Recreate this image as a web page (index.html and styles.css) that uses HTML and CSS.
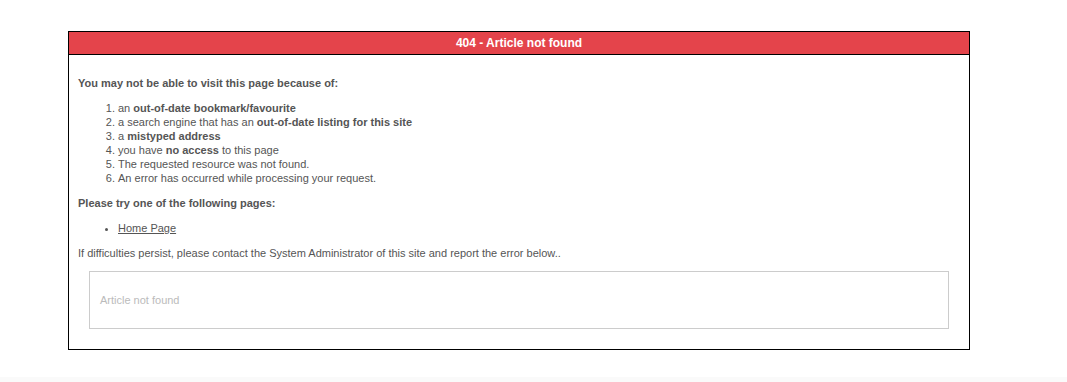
FILE: index.html
```html
<!DOCTYPE html>
<html lang="en">
<head>
    <meta charset="UTF-8">
    <title>404 - Article not found</title>
    <link rel="stylesheet" href="styles.css">
</head>
<body>
    <div class="error-box">
        <div class="error-title">404 - Article not found</div>
        <div class="error-content">
            <p class="lead">You may not be able to visit this page because of:</p>
            <ol class="reasons">
                <li>an <b>out-of-date bookmark/favourite</b></li>
                <li>a search engine that has an <b>out-of-date listing for this site</b></li>
                <li>a <b>mistyped address</b></li>
                <li>you have <b>no access</b> to this page</li>
                <li>The requested resource was not found.</li>
                <li>An error has occurred while processing your request.</li>
            </ol>
            <p class="lead">Please try one of the following pages:</p>
            <ul class="pages">
                <li><a href="#">Home Page</a></li>
            </ul>
            <p class="note">If difficulties persist, please contact the System Administrator of this site and report the error below..</p>
            <div class="error-message">Article not found</div>
        </div>
    </div>
    <div class="page-foot"></div>
</body>
</html>
```

FILE: styles.css
```css
body {
    margin: 0;
    padding: 0;
    font-family: "Liberation Sans", Arial, sans-serif;
    font-size: 11px;
    color: #555;
    background-color: #fff;
}
.error-box {
    width: 900px;
    margin: 31px 0 0 68px;
    border: 1px solid #000;
}
.error-title {
    height: 22px;
    line-height: 22px;
    background-color: #e4444b;
    border-bottom: 1px solid #000;
    color: #fff;
    font-size: 12px;
    font-weight: bold;
    text-align: center;
}
.error-content {
    padding: 21px 9px 20px 9px;
}
.lead {
    margin: 0;
    font-weight: bold;
    line-height: 14px;
}
.reasons {
    margin: 11px 0 11px 0;
    padding-left: 40px;
    line-height: 14px;
}
.pages {
    margin: 11px 0 11px 0;
    padding-left: 40px;
    line-height: 14px;
    list-style: disc;
}
.pages a {
    color: #555;
}
.note {
    margin: 0;
    line-height: 14px;
}
.error-message {
    margin: 11px 11px 0 11px;
    height: 56px;
    line-height: 56px;
    padding-left: 10px;
    border: 1px solid #ccc;
    color: #bbb;
}
.page-foot {
    margin-top: 27px;
    height: 5px;
    background-color: #fafafa;
}
```
